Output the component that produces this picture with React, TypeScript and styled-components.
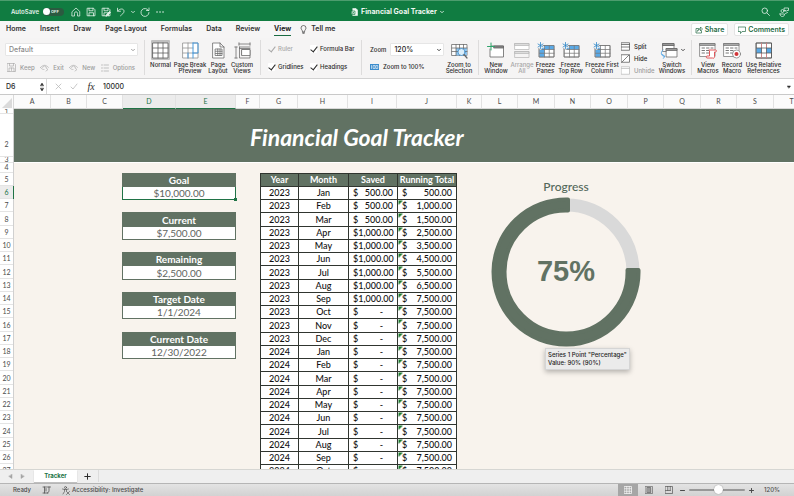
import React, { useEffect, useState } from "react";
import styled, { createGlobalStyle, css } from "styled-components";

const ui = `Inter, "Open Sans", sans-serif`;
const sheetFont = `Lato, "Noto Sans", sans-serif`;
const excelGreen = "#107c41";
const sage = "#617263";
const cream = "#f8f3ed";

const Global = createGlobalStyle`
  * { box-sizing: border-box; }
  body { margin: 0; background: ${cream}; }
  button, input, select { font: inherit; color: inherit; margin: 0; padding: 0; border: 0; background: none; }
  svg { display: block; flex: none; }
`;

const Page = styled.div`
  display: flex;
  flex-direction: column;
  height: 100vh;
  overflow: hidden;
  font: 500 6px/8px ${ui};
  color: #2b2b2b;
`;

/* Title bar */
const TitleBar = styled.header`
  display: grid;
  grid-template-columns: 1fr auto 1fr;
  align-items: center;
  height: 21px;
  flex: none;
  padding: 1px 5px 0 11px;
  border-top: 1px solid #4c9d6e;
  background: ${excelGreen};
  color: #e4f2ea;
`;
const QuickAccess = styled.div`
  display: flex;
  align-items: center;
  gap: 5px;
`;
const AutoSave = styled.label`
  display: flex;
  align-items: center;
  gap: 4px;
  font-weight: 600;
  margin-right: 2px;
`;
const Toggle = styled.input`
  appearance: none;
  display: flex;
  align-items: center;
  width: 21px;
  height: 8px;
  border-radius: 4px;
  background: #2b5a40;
  &::before {
    content: "";
    width: 7px;
    height: 7px;
    border-radius: 50%;
    background: #fff;
  }
  &::after {
    content: "OFF";
    margin-left: 1px;
    font: 700 4px/8px ${ui};
    color: #e4f2ea;
  }
`;
const IconButton = styled.button<{ $narrow?: boolean }>`
  display: flex;
  align-items: center;
  justify-content: center;
  width: ${(p) => (p.$narrow ? 4 : 10)}px;
  height: 12px;
`;
const DocTitle = styled.h1`
  display: flex;
  align-items: center;
  gap: 3px;
  margin: 0;
  padding-right: 5px;
  font: 700 7px/10px ${ui};
  color: #f0f8f3;
`;
const TitleActions = styled.div`
  display: flex;
  justify-content: flex-end;
  gap: 9px;
`;

/* Ribbon */
const TabRow = styled.nav`
  display: flex;
  align-items: flex-start;
  height: 17px;
  flex: none;
  padding: 2px 5px 0 6px;
  background: #f6f5f5;
`;
const Tab = styled.button<{ $active?: boolean }>`
  height: 13px;
  margin-right: 14px;
  font: ${(p) => (p.$active ? 700 : 600)} 7px/12px ${ui};
  color: ${(p) => (p.$active ? "#1f1f1f" : "#333")};
  border-bottom: 1px solid ${(p) => (p.$active ? "#1a6b41" : "transparent")};
  white-space: nowrap;
`;
const TellMe = styled(Tab)`
  display: flex;
  align-items: center;
  gap: 4px;
  margin-left: -5px;
`;
const TabActions = styled.div`
  display: flex;
  gap: 6px;
  margin-left: auto;
`;
const ActionButton = styled.button`
  display: flex;
  align-items: center;
  gap: 2px;
  height: 13px;
  padding: 0 3px;
  border: 1px solid #e4e4e4;
  border-radius: 2px;
  background: #fff;
  color: #256b45;
  font: 600 7px/11px ${ui};
`;
const Ribbon = styled.div`
  display: flex;
  height: 41px;
  flex: none;
  padding: 2px 0 3px;
  border-bottom: 1px solid #d2d2d2;
  background: #f5f4f4;
  overflow: hidden;
`;
const Group = styled.div<{ $width?: number; $start?: number; $gap?: number }>`
  display: flex;
  flex: none;
  align-items: flex-start;
  gap: ${(p) => p.$gap ?? 1}px;
  width: ${(p) => (p.$width ? `${p.$width}px` : "auto")};
  padding: 0 0 0 ${(p) => p.$start ?? 5}px;
  border-right: ${(p) => (p.$width ? "1px solid #dddcdc" : "0")};
`;
const BigButton = styled.button<{ $width: number; $disabled?: boolean }>`
  display: flex;
  flex-direction: column;
  align-items: center;
  flex: none;
  width: ${(p) => p.$width}px;
  text-align: center;
  font: 500 6px/6px ${ui};
  color: ${(p) => (p.$disabled ? "#a5a5a5" : "#2b2b2b")};
  white-space: pre;
`;
const IconSlot = styled.span<{ $selected?: boolean }>`
  display: flex;
  align-items: center;
  justify-content: center;
  gap: 3px;
  height: 20px;
  padding: 0 1px;
  margin-bottom: 2px;
  border-radius: 1px;
  background: ${(p) => (p.$selected ? "#c0c0c0" : "transparent")};
`;
const Stack = styled.div<{ $width: number }>`
  display: flex;
  flex-direction: column;
  gap: 5px;
  width: ${(p) => p.$width}px;
  padding-top: 3px;
`;
const SelectWrap = styled.div<{ $muted?: boolean }>`
  display: flex;
  align-items: center;
  flex: 1;
  height: 13px;
  padding: 0 2px 0 3px;
  border: 1px solid #e6e6e6;
  border-radius: 1px;
  background: #fff;
  color: ${(p) => (p.$muted ? "#8a8a8a" : "#222")};
  select {
    appearance: none;
    flex: 1;
    min-width: 0;
    font: 500 7px/11px ${ui};
    outline: none;
  }
`;
const Line = styled.div`
  display: flex;
  align-items: center;
  gap: 4px;
  height: 13px;
`;
const SmallButton = styled.button<{ $muted?: boolean }>`
  display: flex;
  align-items: center;
  gap: 4px;
  height: 11px;
  color: ${(p) => (p.$muted ? "#9b9b9b" : "#2b2b2b")};
  white-space: nowrap;
`;
const ViewButtons = styled(Line)`
  justify-content: space-between;
  padding: 0 3px 0 2px;
`;
const CheckGrid = styled.div`
  display: grid;
  grid-template-columns: 42px auto;
  grid-auto-rows: 18px;
`;
const CheckLabel = styled.label<{ $muted?: boolean }>`
  display: flex;
  align-items: center;
  gap: 3px;
  color: ${(p) => (p.$muted ? "#a8a8a8" : "#2b2b2b")};
  white-space: nowrap;
`;
const Check = styled.input`
  appearance: none;
  display: flex;
  justify-content: center;
  width: 7px;
  height: 8px;
  border-radius: 1px;
  background: ${(p) => (p.disabled ? "transparent" : "#fff")};
  &:checked::before {
    content: "";
    width: 3px;
    height: 6px;
    border: solid currentColor;
    border-width: 0 1px 1px 0;
    transform: rotate(38deg);
  }
`;
const WindowStack = styled.div`
  display: flex;
  flex-direction: column;
  gap: 1px;
  width: 36px;
  padding: 1px 0 0 1px;
`;

/* Formula bar */
const FormulaBar = styled.div`
  display: flex;
  align-items: center;
  height: 16px;
  flex: none;
  border-bottom: 1px solid #c9c9c9;
  background: #fff;
  font: 500 7px/14px ${ui};
`;
const NameBox = styled.div`
  display: flex;
  align-items: center;
  justify-content: space-between;
  width: 47px;
  height: 15px;
  padding: 0 2px 0 6px;
  border-right: 1px solid #d8d8d8;
  input { width: 30px; outline: none; }
`;
const FormulaTools = styled.div`
  display: flex;
  align-items: center;
  gap: 6px;
  width: 56px;
  padding-left: 6px;
`;
const FormulaInput = styled.input`
  flex: 1;
  min-width: 0;
  outline: none;
`;
const FxButton = styled(IconButton)`
  margin-left: 1px;
  font: italic 400 10px/12px "Liberation Serif", serif;
`;

/* Sheet */
const ColumnHeads = styled.div`
  display: flex;
  height: 14px;
  flex: none;
  overflow: hidden;
  background: #fbfbfb;
  font: 400 7px/13px ${sheetFont};
`;
const Corner = styled.div`
  display: flex;
  align-items: flex-end;
  justify-content: flex-end;
  width: 14px;
  flex: none;
  padding: 1px;
  border-right: 1px solid #d9d9d9;
`;
const ColumnHead = styled.div<{ $width: number; $selected?: boolean }>`
  flex: none;
  width: ${(p) => p.$width}px;
  text-align: center;
  border-right: 1px solid #e2e2e2;
  color: ${(p) => (p.$selected ? "#207346" : "#4c4c4c")};
  background: ${(p) => (p.$selected ? "#ececec" : "transparent")};
  border-bottom: 1px solid ${(p) => (p.$selected ? "#207346" : "#d9d9d9")};
`;
const Sheet = styled.main`
  display: flex;
  flex: 1;
  min-height: 0;
  overflow: hidden;
`;
const RowHeads = styled.div`
  width: 14px;
  flex: none;
  background: #fff;
  border-right: 1px solid #d0d0d0;
`;
const headBase = css`
  display: flex;
  align-items: flex-end;
  justify-content: center;
  overflow: hidden;
  border-bottom: 1px solid #e4e4e4;
  font: 400 7px/11px ${sheetFont};
  color: #4c4c4c;
`;
const TopRowHead = styled.div<{ $height: number; $raise?: number }>`
  ${headBase}
  height: ${(p) => p.$height}px;
  padding-bottom: ${(p) => p.$raise ?? 0}px;
  line-height: ${(p) => Math.min(p.$height - 1, 11)}px;
`;
const RowHead = styled.div<{ $selected?: boolean }>`
  ${headBase}
  height: 13px;
  ${(p) => p.$selected && `color: #207346; background: #ececec; box-shadow: 1px 0 0 #207346;`}
`;
const NumberedRows = styled.div`
  ${RowHead}:nth-child(4n) { height: 14px; }
`;
const Canvas = styled.div`
  flex: 1;
  min-width: 0;
  background: ${cream};
`;
const Banner = styled.div`
  display: flex;
  align-items: center;
  height: 54px;
  padding: 3px 0 0 236px;
  background: ${sage};
  border-bottom: 1px solid #fff;
  overflow: hidden;
`;
const BannerTitle = styled.h2`
  margin: 0;
  font: italic 700 23px/36px "Brush Script MT", Lato, cursive;
  color: #fff;
  white-space: nowrap;
`;
const Content = styled.div`
  display: flex;
  align-items: flex-start;
  padding: 10px 0 0 108px;
`;
const DataTable = styled.table<{ $width: number }>`
  flex: none;
  width: ${(p) => p.$width}px;
  table-layout: fixed;
  border-collapse: collapse;
  th, td { height: 13px; padding: 0; line-height: 12px; text-align: center; white-space: nowrap; }
  tr:nth-child(4n) > * { height: 14px; }
  th { background: ${sage}; color: #fff; font-weight: 700; }
`;
const Summary = styled(DataTable)`
  margin-right: 24px;
  font: 400 10px/12px ${sheetFont};
  th, td { border: 1px solid ${sage}; }
  td { background: #fff; color: #5f655f; }
`;
const SpacerCell = styled.td`
  && { border-color: ${sage} transparent; background: ${cream}; }
`;
const SelectedCell = styled.td`
  && { position: relative; border: 1px solid #207346; }
`;
const FillHandle = styled.span`
  position: absolute;
  right: -2px;
  bottom: -2px;
  width: 3px;
  height: 3px;
  background: #207346;
`;
const Ledger = styled(DataTable)`
  font: 500 9px/12px ${sheetFont};
  color: #111;
  th, td { border: 1px solid #30352f; }
  td { background: #fff; }
`;
const Column = styled.col<{ $width: number }>`
  width: ${(p) => p.$width}px;
`;
const Money = styled.span<{ $dash?: boolean }>`
  display: flex;
  justify-content: space-between;
  padding: 0 ${(p) => (p.$dash ? 14 : 4)}px 0 4px;
`;
const FlaggedCell = styled.td<{ $flag: boolean }>`
  && { background: ${(p) => (p.$flag ? "linear-gradient(135deg, #1d7a2e 3px, #fff 3px)" : "#fff")}; }
`;
const Chart = styled.figure`
  position: relative;
  display: flex;
  flex-direction: column;
  align-items: center;
  gap: 3px;
  flex: none;
  width: 150px;
  margin: 6px 0 0 34px;
  figcaption { font: 500 12px/15px ${sheetFont}; color: #53685a; }
`;
const Ring = styled.div`
  display: grid;
  place-items: center;
  > * { grid-area: 1 / 1; }
`;
const Percent = styled.strong`
  padding-bottom: 2px;
  font: 700 29px/32px "Liberation Sans", sans-serif;
  color: ${sage};
`;
const Tooltip = styled.div`
  position: absolute;
  left: 54px;
  top: 169px;
  padding: 2px;
  border: 1px solid #d5d5d5;
  background: #ebebeb;
  box-shadow: 0 2px 5px rgba(0, 0, 0, 0.28);
  font: 500 6px/8px ${ui};
  color: #222;
  white-space: nowrap;
`;

/* Footer */
const SheetTabs = styled.div`
  display: flex;
  align-items: flex-start;
  height: 14px;
  flex: none;
  border-top: 1px solid #d6d6d3;
  background: #efefef;
`;
const TabArrows = styled.div`
  display: flex;
  gap: 2px;
  width: 34px;
  padding-left: 5px;
`;
const SheetTab = styled.button`
  width: 43px;
  height: 12px;
  background: #fff;
  color: #1b7346;
  font: 700 6px/12px ${ui};
  box-shadow: 0 1px 1px rgba(0, 0, 0, 0.2);
`;
const AddSheet = styled.button`
  display: flex;
  align-items: center;
  justify-content: center;
  width: 22px;
  height: 12px;
  border-right: 1px solid #dcdcdc;
`;
const StatusBar = styled.footer`
  display: flex;
  align-items: center;
  height: 13px;
  flex: none;
  padding: 0 14px 0 13px;
  border-top: 1px solid #b5b5b5;
  background: linear-gradient(#e3e3e3, #d2d2d2);
  color: #4b4b4b;
`;
const StatusItem = styled.button`
  display: flex;
  align-items: center;
  gap: 2px;
  margin-left: 11px;
`;
const ZoomArea = styled.div`
  display: flex;
  align-items: center;
  gap: 2px;
  margin-left: auto;
`;
const ModeButton = styled.button<{ $active?: boolean }>`
  display: flex;
  align-items: center;
  justify-content: center;
  width: ${(p) => (p.$active ? 20 : 18)}px;
  height: 12px;
  background: ${(p) => (p.$active ? "#a6a6a6" : "transparent")};
`;
const Slider = styled.input`
  appearance: none;
  width: 56px;
  height: 10px;
  margin: 0 2px;
  &::-webkit-slider-runnable-track { height: 2px; border-radius: 1px; background: #989898; }
  &::-webkit-slider-thumb {
    appearance: none;
    width: 9px;
    height: 9px;
    margin-top: -4px;
    border-radius: 50%;
    background: #fff;
    box-shadow: 0 0 1px rgba(0, 0, 0, 0.5);
  }
`;
const ZoomValue = styled.output`
  width: 22px;
  margin-left: 2px;
  text-align: right;
`;

/* Icons */
type IconProps = { w?: number; h?: number; vb: string; color?: string; sw?: number; children: React.ReactNode };
const Icon = ({ w = 10, h = 10, vb, color = "currentColor", sw = 1, children }: IconProps) => (
  <svg width={w} height={h} viewBox={vb} fill="none" stroke={color} strokeWidth={sw} strokeLinecap="round" strokeLinejoin="round" aria-hidden="true">
    {children}
  </svg>
);
const Chevron = ({ size = 4 }: { size?: number }) => (
  <Icon w={size} h={size} vb="0 0 8 8" sw={1.6}><path d="M1 2.5 4 5.5 7 2.5" /></Icon>
);
const HomeIcon = () => (
  <Icon vb="0 0 20 20" sw={1.5}><path d="M2.5 9 10 2l7.500 7v9H13v-5.500a3 3 0 0 0-6 0V18H2.500z" /></Icon>
);
const SaveIcon = ({ pen }: { pen?: boolean }) => (
  <Icon vb="0 0 20 20" sw={1.6}>
    <path d="M3 2.500h12l3 3V17.500H3zM6 2.500v5h8v-5M6 17.500v-6h9v6" />
    {pen && <path d="m10 18 1-3 6-6 2 2-6 6z" fill="currentColor" />}
  </Icon>
);
const UndoIcon = () => (
  <Icon vb="0 0 20 20" sw={1.6}><path d="M3 2.500v6h6M3.500 8C8 2 16 3 16 8.500c0 4-4 6-7 9" /></Icon>
);
const RedoIcon = () => (
  <Icon vb="0 0 20 20" sw={1.6}><path d="M18 2v5h-5M17 7a8 8 0 1 0 1 4" /></Icon>
);
const EyeIcon = ({ color = "#a9a9a9" }) => (
  <Icon w={9} h={9} vb="0 0 18 18" color={color} sw={1.2}>
    <path d="M1 9c4-6 12-6 16 0M1 9c2 3 4 4 7 4M5 9a4 3 0 0 1 8 0M12 10l4 3-4 3" />
  </Icon>
);
const NormalIcon = () => (
  <Icon w={17} h={17} vb="0 0 34 34" color="#555" sw={1.5}>
    <rect x="2" y="2" width="30" height="30" fill="#fff" /><path d="M12 2v30M22 2v30M2 12h30M2 22h30" />
  </Icon>
);
const BreakIcon = () => (
  <Icon w={17} h={17} vb="0 0 34 34" color="#8b8b8b" sw={1.5}>
    <rect x="2" y="2" width="30" height="30" fill="#fff" /><path d="M12 2v30M2 12h20M2 22h30" />
    <path d="M22 2v20M22 2h10v20H22M12 22v10M22 22v10" stroke="#4a9bdc" strokeWidth="2" />
  </Icon>
);
const PageIcon = () => (
  <Icon w={13} h={17} vb="0 0 26 34" color="#666" sw={1.5}>
    <path d="M2 2h14l8 8v22H2zM16 2v8h8" fill="#fff" /><path d="M7 14h13v13H7zM11.500 14v13M16 14v13M7 18.500h13M7 23h13" />
  </Icon>
);
const CustomIcon = () => (
  <Icon w={17} h={17} vb="0 0 34 34" color="#666" sw={1.5}>
    <path d="M10 4h22M10 1.500v5M32 1.500v5M4 10v22M1.500 10h5M1.500 32h5" />
    <path d="M11 10h21M11 10v22h21V15H16v11" /><path d="M16 15h16v12H16z" fill="#fff" /><path d="M11 13h21" />
  </Icon>
);
const ZoomSelIcon = () => (
  <Icon w={17} h={17} vb="0 0 34 34" color="#666" sw={1.5}>
    <rect x="2" y="5" width="30" height="22" fill="#fff" />
    <path d="M10 12h22v15H10z" fill="#8ec4ee" stroke="none" /><path d="M2 12h30M2 19h30M10 5v22M17 5v22M25 5v22" />
    <circle cx="21" cy="20" r="7" fill="#dbeefa" stroke="#3b8ccc" /><path d="m26 25 6 7" strokeWidth="2.500" />
  </Icon>
);
const NewWindowIcon = () => (
  <Icon w={18} h={17} vb="0 0 36 34" color="#666" sw={1.6}>
    <path d="M9 8h24v22H6V14" fill="#fff" /><path d="M14 8h19v4H14z" fill="#888" />
    <path d="M8 2v14M1 9h14" stroke="#2fa36b" strokeWidth="2" />
  </Icon>
);
const ArrangeIcon = () => (
  <Icon w={16} h={17} vb="0 0 32 34" color="#b8b8b8" sw={1.5}>
    <rect x="2" y="3" width="28" height="12" fill="#fff" /><path d="M2 3h28v4H2zM2 19h28v4H2z" fill="#ddd" /><path d="M2 19h28v12H2z" />
  </Icon>
);
const FreezeIcon = ({ kind }: { kind: "both" | "row" | "col" }) => (
  <Icon w={18} h={17} vb="0 0 36 34" color="#777" sw={1.5}>
    <rect x="5" y="7" width="29" height="23" fill="#fff" />
    {kind !== "col" && <path d="M5 7h29v8H5z" fill="#5aa9e6" stroke="none" />}
    {kind !== "row" && <path d="M5 7h10v23H5z" fill="#5aa9e6" stroke="none" />}
    <path d="M5 7h29v23H5zM5 15h29M5 22.500h29M15 7v23M24.500 7v23" />
    <path d="M7 1v12M2 4l10 6M12 4 2 10" stroke="#f5f4f4" strokeWidth="5" />
    <path d="M7 1v12M2 4l10 6M12 4 2 10" stroke="#2f86c8" strokeWidth="1.600" />
  </Icon>
);
const PaneIcon = ({ kind }: { kind: "split" | "hide" | "unhide" }) => (
  <Icon w={9} h={9} vb="0 0 18 18" color={kind === "unhide" ? "#bbb" : "#555"} sw={1.5}>
    <rect x="1" y="1.500" width="16" height="15" fill="#fff" />
    {kind === "split" && <path d="M1 5h16M1 10h16" />}
    {kind === "hide" && <path d="M2 16 16 2" />}
    {kind === "unhide" && <path d="M1 5h16" />}
  </Icon>
);
const SwitchIcon = () => (
  <Icon w={18} h={17} vb="0 0 36 34" color="#666" sw={1.5}>
    <path d="M6 3h22v16H6zM6 7h22" fill="#fff" /><path d="M6 3h22v4H6z" fill="#999" />
    <path d="M13 13h21v17H13z" fill="#fff" /><path d="M13 13h21v4H13z" fill="#999" />
    <path d="M6 16c-5 4-5 12 3 13M5 25l5 4-4 4" stroke="#5aa9e6" strokeWidth="2" />
  </Icon>
);
const MacroIcon = ({ record }: { record?: boolean }) => (
  <Icon w={18} h={17} vb="0 0 36 34" color="#777" sw={1.5}>
    <path d="M2 3h30v26H2z" fill="#fff" /><path d="M2 3h30v4H2z" fill="#aaa" />
    <path d="M6 12h5M15 12h5M24 12h4M6 17h5M15 17h5M6 22h5M15 22h4" strokeWidth="2" />
    {record ? (
      <><circle cx="27" cy="24" r="8" fill="#fff" /><circle cx="27" cy="24" r="4" fill="#d13438" stroke="none" /></>
    ) : (
      <path d="M20 16h13c3 0 2 4 0 4h-2v9c0 4-3 4-4 3H16c-2 0-2-4 0-4h5V18" fill="#fff" stroke="#e0565a" strokeWidth="2" />
    )}
  </Icon>
);
const RelativeIcon = () => (
  <Icon w={18} h={17} vb="0 0 36 34" color="#555" sw={1.5}>
    <rect x="3" y="2" width="30" height="30" fill="#fff" />
    <path d="M3 12h30v10H3z" fill="#5aa9e6" stroke="none" /><path d="M13 12h10v10H13z" fill="#fff" stroke="none" />
    <path d="M3 2h30v30H3zM13 2v30M23 2v30M3 12h30M3 22h30" /><path d="M13 2v8M23 2v8M13 24v8M23 24v8" stroke="#e58a8c" />
  </Icon>
);

type RibbonItem = { label: string; icon: React.ReactNode; width: number; selected?: boolean; disabled?: boolean; menu?: boolean };
const RibbonButton = ({ label, icon, width, selected, disabled, menu }: RibbonItem) => (
  <BigButton $width={width} $disabled={disabled}>
    <IconSlot $selected={selected}>{icon}{menu && <Chevron />}</IconSlot>
    {label}
  </BigButton>
);
const CheckItem = ({ label, disabled }: { label: string; disabled?: boolean }) => {
  const [on, setOn] = useState(true);
  return (
    <CheckLabel $muted={disabled}>
      <Check type="checkbox" checked={on} disabled={disabled} onChange={() => setOn(!on)} />
      {label}
    </CheckLabel>
  );
};

const columns: [string, number][] = [
  ["A", 37], ["B", 36], ["C", 36], ["D", 53], ["E", 60], ["F", 24], ["G", 38], ["H", 50], ["I", 49], ["J", 60],
  ["K", 25], ["L", 36], ["M", 37], ["N", 36], ["O", 37], ["P", 36], ["Q", 37], ["R", 36], ["S", 37], ["T", 36],
  ["U", 37], ["V", 36], ["W", 37], ["X", 36], ["Y", 37], ["Z", 36],
];
const tabs = ["Home", "Insert", "Draw", "Page Layout", "Formulas", "Data", "Review", "View"];
const summary = [
  ["Goal", "$10,000.00"], ["Current", "$7,500.00"], ["Remaining", "$2,500.00"],
  ["Target Date", "1/1/2024"], ["Current Date", "12/30/2022"],
];
const months = ["Jan", "Feb", "Mar", "Apr", "May", "Jun", "Jul", "Aug", "Sep", "Oct", "Nov", "Dec"];
const deposits = [500, 500, 500, 1000, 1000, 1000, 1000, 1000, 1000];
const money = (n: number) => n.toLocaleString("en-US", { minimumFractionDigits: 2 });
const ledger = Array.from({ length: 24 }, (_, i) => ({
  year: 2023 + Math.floor(i / 12),
  month: months[i % 12],
  saved: deposits[i] ?? 0,
  total: deposits.slice(0, i + 1).reduce((a, b) => a + b, 0),
}));

/* Only the rows and columns that reach into the window are rendered. */
const measure = () => {
  let x = 14;
  const shown = columns.filter(([, w]) => {
    const visible = x < window.innerWidth;
    x += w;
    return visible;
  });
  return { shown, rows: Math.ceil((window.innerHeight - 200) / 13) };
};
const useVisible = () => {
  const [visible, setVisible] = useState(measure);
  useEffect(() => {
    const update = () => setVisible(measure());
    window.addEventListener("resize", update);
    return () => window.removeEventListener("resize", update);
  }, []);
  return visible;
};

export default function App() {
  const [zoom, setZoom] = useState(120);
  const { shown, rows } = useVisible();
  return (
    <Page>
      <Global />
      <TitleBar>
        <QuickAccess>
          <AutoSave>AutoSave<Toggle type="checkbox" role="switch" /></AutoSave>
          <IconButton aria-label="Home"><HomeIcon /></IconButton>
          <IconButton aria-label="Save"><SaveIcon /></IconButton>
          <IconButton aria-label="Save as"><SaveIcon pen /></IconButton>
          <IconButton aria-label="Undo"><UndoIcon /></IconButton>
          <IconButton $narrow aria-label="Undo history"><Chevron /></IconButton>
          <IconButton aria-label="Redo"><RedoIcon /></IconButton>
          <IconButton aria-label="More">
            <Icon w={8} h={4} vb="0 0 16 8" sw={3}><path d="M2 4h.1M8 4h.1M14 4h.1" /></Icon>
          </IconButton>
        </QuickAccess>
        <DocTitle>
          <Icon w={7} h={8} vb="0 0 14 16" sw={1.2}>
            <path d="M4 1h6l3 3v11H4z" fill="currentColor" /><path d="M1 6h7v7H1z" fill="#e4f2ea" stroke={excelGreen} /><path d="m3 8 3 3M6 8l-3 3" stroke={excelGreen} />
          </Icon>
          Financial Goal Tracker
          <Chevron />
        </DocTitle>
        <TitleActions>
          <IconButton aria-label="Search">
            <Icon w={9} h={9} vb="0 0 18 18" sw={1.6}><circle cx="7.500" cy="7.500" r="5.500" /><path d="m12 12 5 5" /></Icon>
          </IconButton>
          <IconButton aria-label="Collaborate">
            <Icon vb="0 0 20 20" sw={1.5}><circle cx="7" cy="8" r="3" /><path d="M2 14h9c1 3-2 5-4.500 5S2 17 2 14zM11 2h8v5h-3l-2 2V7h-3zM13 13l4-2" /></Icon>
          </IconButton>
        </TitleActions>
      </TitleBar>

      <TabRow aria-label="Ribbon tabs">
        {tabs.map((t) => <Tab key={t} $active={t === "View"}>{t}</Tab>)}
        <TellMe>
          <Icon w={7} h={9} vb="0 0 14 18" sw={1.3}><path d="M5 13c0-3-3-4-3-7a5 5 0 0 1 10 0c0 3-3 4-3 7zM5 15.500h4M6 17.500h2" /></Icon>
          Tell me
        </TellMe>
        <TabActions>
          <ActionButton>
            <Icon w={8} h={8} vb="0 0 16 16" sw={1.4}><path d="M7 5H2v9h11v-4M5 10c1-4 4-5 6-5V2l4 4-4 4V7c-3 0-5 1-6 3z" /></Icon>
            Share
          </ActionButton>
          <ActionButton>
            <Icon w={8} h={8} vb="0 0 16 16" sw={1.4}><path d="M1 2h14v9H8l-3 4v-4H1z" /></Icon>
            Comments
          </ActionButton>
        </TabActions>
      </TabRow>

      <Ribbon>
        <Group $width={145}>
          <Stack $width={133}>
            <Line>
              <SelectWrap $muted>
                <select aria-label="Sheet view"><option>Default</option></select><Chevron />
              </SelectWrap>
            </Line>
            <ViewButtons>
              <SmallButton $muted>
                <Icon w={9} h={9} vb="0 0 18 18" color="#a9a9a9" sw={1.3}><path d="M1 1h14l2 2v14H1zM5 1v5h8V1M4 17v-7h10v7M9 10v5" /></Icon>
                Keep
              </SmallButton>
              <SmallButton $muted><EyeIcon />Exit</SmallButton>
              <SmallButton $muted><EyeIcon />New</SmallButton>
              <SmallButton $muted>
                <Icon w={8} h={8} vb="0 0 16 16" color="#a9a9a9" sw={1.4}><path d="M1 2h2M6 2h9M1 8h2M6 8h9M1 14h2M6 14h9" /></Icon>
                Options
              </SmallButton>
            </ViewButtons>
          </Stack>
        </Group>
        <Group $width={116} $gap={2}>
          <RibbonButton width={21} label="Normal" icon={<NormalIcon />} selected />
          <RibbonButton width={34} label={"Page Break\nPreview"} icon={<BreakIcon />} />
          <RibbonButton width={18} label={"Page\nLayout"} icon={<PageIcon />} />
          <RibbonButton width={26} label={"Custom\nViews"} icon={<CustomIcon />} />
        </Group>
        <Group $width={101} $start={7}>
          <CheckGrid>
            <CheckItem label="Ruler" disabled />
            <CheckItem label="Formula Bar" />
            <CheckItem label="Gridlines" />
            <CheckItem label="Headings" />
          </CheckGrid>
        </Group>
        <Group $width={117} $start={8}>
          <Stack $width={74}>
            <Line>
              <label htmlFor="zoom-level">Zoom</label>
              <SelectWrap>
                <select id="zoom-level"><option>120%</option></select><Chevron />
              </SelectWrap>
            </Line>
            <SmallButton>
              <Icon w={9} h={6} vb="0 0 18 12" color="#fff" sw={1.2}>
                <rect x="0" y="0" width="18" height="12" fill="#3b8ccc" stroke="none" /><path d="M3 3v6M7 3h3v6H7zM12.500 3h3v6h-3z" />
              </Icon>
              Zoom to 100%
            </SmallButton>
          </Stack>
          <RibbonButton width={28} label={"Zoom to\nSelection"} icon={<ZoomSelIcon />} />
        </Group>
        <Group $width={213} $start={4}>
          <RibbonButton width={26} label={"New\nWindow"} icon={<NewWindowIcon />} />
          <RibbonButton width={24} label={"Arrange\nAll"} icon={<ArrangeIcon />} disabled />
          <RibbonButton width={21} label={"Freeze\nPanes"} icon={<FreezeIcon kind="both" />} />
          <RibbonButton width={27} label={"Freeze\nTop Row"} icon={<FreezeIcon kind="row" />} />
          <RibbonButton width={34} label={"Freeze First\nColumn"} icon={<FreezeIcon kind="col" />} />
          <WindowStack>
            <SmallButton><PaneIcon kind="split" />Split</SmallButton>
            <SmallButton><PaneIcon kind="hide" />Hide</SmallButton>
            <SmallButton $muted><PaneIcon kind="unhide" />Unhide</SmallButton>
          </WindowStack>
          <RibbonButton width={30} label={"Switch\nWindows"} icon={<SwitchIcon />} menu />
        </Group>
        <Group $gap={2}>
          <RibbonButton width={22} label={"View\nMacros"} icon={<MacroIcon />} />
          <RibbonButton width={22} label={"Record\nMacro"} icon={<MacroIcon record />} />
          <RibbonButton width={37} label={"Use Relative\nReferences"} icon={<RelativeIcon />} />
        </Group>
      </Ribbon>

      <FormulaBar>
        <NameBox>
          <input aria-label="Name box" defaultValue="D6" />
          <Icon w={4} h={10} vb="0 0 8 20" sw={1}><path d="m1 7 3-5 3 5zM1 13l3 5 3-5z" fill="currentColor" /></Icon>
        </NameBox>
        <FormulaTools>
          <IconButton aria-label="Cancel"><Icon w={7} h={7} vb="0 0 14 14" color="#b5b5b5" sw={1.5}><path d="m2 2 10 10M12 2 2 12" /></Icon></IconButton>
          <IconButton aria-label="Enter"><Icon w={8} h={7} vb="0 0 16 14" color="#b5b5b5" sw={1.5}><path d="m2 8 4 4 8-10" /></Icon></IconButton>
          <FxButton aria-label="Insert function">fx</FxButton>
        </FormulaTools>
        <FormulaInput aria-label="Formula" defaultValue="10000" />
        <IconButton aria-label="Expand formula bar"><Icon w={4} h={4} vb="0 0 8 8"><path d="M1 2h6L4 6z" fill="currentColor" /></Icon></IconButton>
      </FormulaBar>

      <ColumnHeads>
        <Corner><Icon vb="0 0 10 10" sw={0}><path d="M10 0v10H0z" fill="#dadada" /></Icon></Corner>
        {shown.map(([name, w]) => (
          <ColumnHead key={name} $width={w} $selected={name === "D" || name === "E"}>{name}</ColumnHead>
        ))}
      </ColumnHeads>
      <Sheet>
        <RowHeads>
          <TopRowHead $height={5}>1</TopRowHead>
          <TopRowHead $height={43} $raise={6}>2</TopRowHead>
          <TopRowHead $height={6}>3</TopRowHead>
          <TopRowHead $height={10}>4</TopRowHead>
          <NumberedRows>
            {Array.from({ length: rows }, (_, i) => <RowHead key={i} $selected={i === 1}>{i + 5}</RowHead>)}
          </NumberedRows>
        </RowHeads>
        <Canvas>
          <Banner><BannerTitle>Financial Goal Tracker</BannerTitle></Banner>
          <Content>
            <Summary $width={114}>
              <tbody>
                {summary.map(([label, value], i) => (
                  <React.Fragment key={label}>
                    <tr><th scope="row">{label}</th></tr>
                    <tr>{i === 0 ? <SelectedCell>{value}<FillHandle /></SelectedCell> : <td>{value}</td>}</tr>
                    {i < summary.length - 1 && <tr><SpacerCell /></tr>}
                  </React.Fragment>
                ))}
              </tbody>
            </Summary>
            <Ledger $width={196}>
              <colgroup><Column $width={38} /><Column $width={50} /><Column $width={49} /><Column $width={59} /></colgroup>
              <tbody>
                <tr><th>Year</th><th>Month</th><th>Saved</th><th>Running Total</th></tr>
                {ledger.slice(0, rows - 1).map((r, i) => (
                  <tr key={i}>
                    <td>{r.year}</td>
                    <td>{r.month}</td>
                    <td><Money $dash={!r.saved}><span>$</span><span>{r.saved ? money(r.saved) : "-"}</span></Money></td>
                    <FlaggedCell $flag={i > 0}><Money><span>$</span><span>{money(r.total)}</span></Money></FlaggedCell>
                  </tr>
                ))}
              </tbody>
            </Ledger>
            <Chart>
              <figcaption>Progress</figcaption>
              <Ring>
                <svg width="150" height="150" viewBox="0 0 150 150" role="img" aria-label="75 percent">
                  <path d="M75 8a67 67 0 0 1 67 67" fill="none" stroke="#d9d9d9" strokeWidth="13" />
                  <path d="M77 2.500V13.500A61.500 61.500 0 1 0 136.500 73H147.500A72.500 72.500 0 1 1 77 2.500z" fill={sage} stroke={sage} strokeWidth="4" strokeLinejoin="round" />
                </svg>
                <Percent>75%</Percent>
              </Ring>
              <Tooltip role="tooltip">Series 1 Point "Percentage"<br />Value: 90% (90%)</Tooltip>
            </Chart>
          </Content>
        </Canvas>
      </Sheet>

      <SheetTabs>
        <TabArrows>
          <IconButton aria-label="Previous sheet"><Icon w={5} h={5} vb="0 0 10 10" color="#a5a5a5"><path d="M8 1v8L2 5z" fill="#a5a5a5" /></Icon></IconButton>
          <IconButton aria-label="Next sheet"><Icon w={5} h={5} vb="0 0 10 10" color="#a5a5a5"><path d="M2 1v8l6-4z" fill="#a5a5a5" /></Icon></IconButton>
        </TabArrows>
        <SheetTab>Tracker</SheetTab>
        <AddSheet aria-label="Add sheet"><Icon w={7} h={7} vb="0 0 14 14" sw={2}><path d="M7 1.500v11M1.500 7h11" /></Icon></AddSheet>
      </SheetTabs>
      <StatusBar>
        <span>Ready</span>
        <StatusItem aria-label="Record macro">
          <Icon w={9} h={8} vb="0 0 18 16" sw={1.5}><path d="M2 2h7M5 2v12M2 14h10M11 2h6M14 2v7c0 4-3 5-3 5M8 5v5" /></Icon>
        </StatusItem>
        <StatusItem>
          <Icon w={8} h={9} vb="0 0 16 18" sw={1.3}><circle cx="7" cy="3" r="2" /><path d="M1 6l4 1v4l-3 5M13 6 9 7v3M5 7h4M9 11l6 6M15 11l-6 6" /></Icon>
          Accessibility: Investigate
        </StatusItem>
        <ZoomArea>
          <ModeButton $active aria-label="Normal view"><Icon w={8} h={8} vb="0 0 16 16" color="#f5f5f5" sw={1.5}><path d="M1 1h14v14H1zM5.500 1v14M10.500 1v14M1 5.500h14M1 10.500h14" /></Icon></ModeButton>
          <ModeButton aria-label="Page layout view"><Icon w={8} h={8} vb="0 0 16 16" sw={1.1}><path d="M1 1h14v14H1z" /><path d="M4.500 3h7v10h-7z" fill="#999" /></Icon></ModeButton>
          <ModeButton aria-label="Page break view"><Icon w={8} h={8} vb="0 0 16 16" sw={1.3}><path d="M1 1h14v14H1zM5.500 1v8M10.500 1v8M1 9h9.500" /></Icon></ModeButton>
          <button aria-label="Zoom out"><Icon w={5} h={5} vb="0 0 10 10" sw={2}><path d="M1 5h8" /></Icon></button>
          <Slider type="range" min={10} max={220} value={zoom} aria-label="Zoom" onChange={(e) => setZoom(Number(e.target.value))} />
          <button aria-label="Zoom in"><Icon w={5} h={5} vb="0 0 10 10" sw={2}><path d="M1 5h8M5 1v8" /></Icon></button>
          <ZoomValue>{zoom}%</ZoomValue>
        </ZoomArea>
      </StatusBar>
    </Page>
  );
}
